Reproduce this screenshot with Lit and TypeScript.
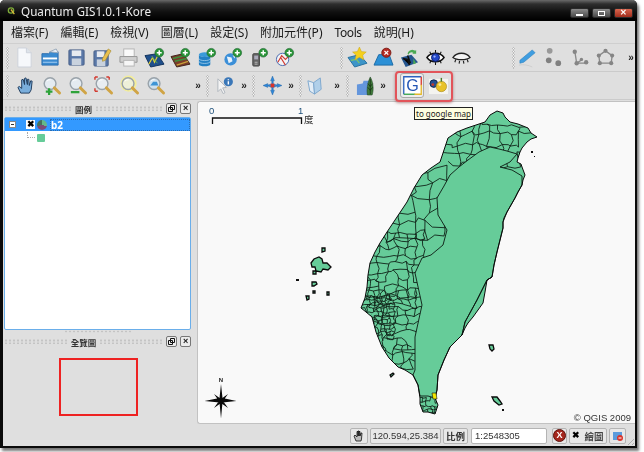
// QGIS main window, toolbars + legend dock + map canvas + status bar
import { LitElement, html, svg, css, type SVGTemplateResult } from 'lit';
import { customElement } from 'lit/decorators.js';

const plus = svg`<circle cx="15" cy="5" r="4.6" fill="#2a9438" stroke="#15602a" stroke-width=".6"/><path d="M15 2.400v5.200M12.400 5h5.200" stroke="#fff" stroke-width="1.600"/>`;
const lens = (fill: string, ring = '#9aa3aa') => svg`<circle cx="8.500" cy="8" r="6.200" fill="${fill}" stroke="${ring}" stroke-width="1.500"/><path d="M13 12.500l5.500 5.500" stroke="#d0a445" stroke-width="3" stroke-linecap="round"/><path d="M5 5.500a4.500 4.500 0 0 1 4-1.600" stroke="#fff" fill="none"/>`;

const ICONS: Record<string, SVGTemplateResult> = {
  doc: svg`<path d="M3 0h9l5 5v15H3z" fill="#f6f8fb" stroke="#ccd2da"/><path d="M12 0v5h5" fill="#dde3ea" stroke="#ccd2da"/>`,
  open: svg`<path d="M1 6h7l2-2h8v14H1z" fill="#3a8ad0" stroke="#2a6cad"/><path d="M2 10h15v2H2z" fill="#fff"/><path d="M9 4l7-3 2 4z" fill="#e8eef5" stroke="#9ab"/><path d="M2 15h15" stroke="#a9d0f2"/>`,
  save: svg`<rect x="2" y="2" width="16" height="16" rx="1" fill="#5a78a8" stroke="#4a6088"/><rect x="5" y="2.500" width="10" height="6" fill="#e8ebf0"/><rect x="5" y="11" width="10" height="7" fill="#c9d2de"/>`,
  saveas: svg`<rect x="1" y="3" width="15" height="16" rx="1" fill="#5a78a8" stroke="#4a6088"/><rect x="4" y="3.500" width="8" height="6" fill="#e8ebf0"/><rect x="4" y="12" width="9" height="7" fill="#c9d2de"/><path d="M10 11l6-10 3 2-6 10-3 1z" fill="#e9c050" stroke="#a08428" stroke-width=".6"/>`,
  print: svg`<rect x="5" y="1" width="11" height="8" fill="#fafafa" stroke="#b4b4b4"/><path d="M1 9h18v6H1z" fill="#cfcfcf" stroke="#969696"/><rect x="5" y="13" width="11" height="6" fill="#f6f6f6" stroke="#b4b4b4"/>`,
  vector: svg`<path d="M0 8l13-2 7 11-14 3z" fill="#1f4f8c" stroke="#12335c"/><path d="M4 17l4-7 2 5 3-6" stroke="#e5d33a" fill="none" stroke-width="1.200"/><path d="M7 9l6 7" stroke="#63b04a"/>${plus}`,
  raster: svg`<path d="M0 9l13-3 7 11-14 3z" fill="#7a3c2a" stroke="#40241a"/><path d="M2 11l13-3M4 14l13-3" stroke="#3f8f3c" stroke-width="1.600"/><path d="M6 18l12-4" stroke="#c9a13a" stroke-width="1.400"/>${plus}`,
  db: svg`<ellipse cx="8" cy="7" rx="6" ry="2.500" fill="#3a9bd9"/><path d="M2 7v10c0 3 12 3 12 0V7c0 3-12 3-12 0z" fill="#2380c4"/><path d="M2 11c0 3 12 3 12 0M2 14c0 3 12 3 12 0" stroke="#bfe0f5" fill="none" stroke-width=".7"/>${plus}`,
  wms: svg`<circle cx="8" cy="12" r="6.500" fill="#3b8fd8"/><path d="M4 9l5 1 1 4-4 2zM10 7l3 2-1 2z" fill="#e8f2fa"/>${plus}`,
  gps: svg`<rect x="4" y="6" width="7" height="13" rx="1" fill="#666" stroke="#444"/><rect x="5.500" y="8" width="4" height="4" fill="#aab"/><path d="M6 15h3M6 17h3" stroke="#bbb"/>${plus}`,
  wfs: svg`<circle cx="8" cy="12" r="6.500" fill="#f3f3f5" stroke="#4668b0"/><path d="M3 15l4-7 4 4 3-3M6 10l5 8" stroke="#d23a30" fill="none" stroke-width="1.200"/>${plus}`,
  star: svg`<path d="M0 10l12-3 8 9-13 4z" fill="#3d95c9" stroke="#26709e"/><path d="M3 13l6-1 3 4" stroke="#7cc46b" fill="none" stroke-width="1.400"/><path d="M12-1l2.200 4.800 5 .4-3.700 3.300 1.100 5-4.600-2.700-4.600 2.700 1.100-5-3.700-3.300 5-.4z" fill="#f4d01d" stroke="#c8a31c" stroke-width=".5"/>`,
  remove: svg`<path d="M0 18l5-11h11l4 11z" fill="#2c90d6" stroke="#1c6aa4"/><circle cx="13" cy="5" r="4.800" fill="#b52a22" stroke="#7a1a14"/><path d="M11 3l4 4m0-4l-4 4" stroke="#fff" stroke-width="1.400"/>`,
  overview: svg`<path d="M1 10l11-3 7 8-13 5z" fill="#25558f"/><path d="M3 11l5 1 2 6M8 8l3 8" stroke="#111" stroke-width="1.600"/><path d="M8 6a5 5 0 0 1 8-3l1-1v4h-4l1-1a3.400 3.400 0 0 0-5 2z" fill="#4aa852"/><path d="M14 11l3 5-3 1z" fill="#4aa852"/>`,
  eye: svg`<path d="M1 10c4-6 14-6 18 0-4 6-14 6-18 0z" fill="#fff" stroke="#111" stroke-width="1.500"/><circle cx="10" cy="10" r="4.200" fill="#2448c8" stroke="#0b1a66"/><circle cx="9" cy="9" r="1.200" fill="#9fb6ff"/><path d="M10 2v3M4 4l1.500 3M16 4l-1.500 3M10 18v-3M4 16l1.500-3M16 16l-1.500-3" stroke="#111" stroke-width="1.100"/>`,
  eyeoff: svg`<path d="M1 10c4-6 14-6 18 0-4 3-14 3-18 0z" fill="#f4f4f4" stroke="#222" stroke-width="1.400"/><path d="M4 12l-1 3M8 13.500l-.5 3M12 13.500l.5 3M16 12l1 3" stroke="#222" stroke-width="1.200"/>`,
  pencil: svg`<path d="M2 13L15 2l3 3L6 15l-4 1z" fill="#3f9de0" stroke="#2b7fbe" stroke-width=".6"/><path d="M1 18c5-1 10 0 14 2" stroke="#cdcdcd" fill="none"/>`,
  points: svg`<circle cx="6" cy="3" r="3" fill="#999"/><circle cx="5" cy="13" r="3" fill="#808080"/><circle cx="15" cy="16" r="3" fill="#808080"/>`,
  line: svg`<path d="M5 3l2 13h10M7 16l6-4" stroke="#8a8a8a" fill="none" stroke-width="1.400"/><circle cx="5" cy="4" r="2.300" fill="#858585"/><circle cx="7" cy="16" r="2.300" fill="#858585"/><circle cx="17" cy="15" r="2.300" fill="#858585"/><circle cx="12" cy="12" r="1.800" fill="#858585"/>`,
  poly: svg`<path d="M10 3l7 5-1 8H4L3 8z" fill="none" stroke="#8a8a8a" stroke-width="1.400"/><circle cx="10" cy="3" r="2.200" fill="#858585"/><circle cx="17" cy="8" r="2.200" fill="#858585"/><circle cx="16" cy="16" r="2.200" fill="#858585"/><circle cx="4" cy="16" r="2.200" fill="#858585"/><circle cx="3" cy="8" r="2.200" fill="#858585"/>`,
  hand: svg`<path d="M5 18l-3-6 1.500-1 2.500 2V4l1.500-.5L9 9V2.500l1.500-.5L12 9V3.500l1.500 0L14 10l1.500-5 1.500.5-1 9-2 3.500z" fill="#7aaedc" stroke="#1e3a5c" stroke-width="1"/>`,
  zoomin: svg`${lens('#e4ebf1')}<path d="M4 16.500h7M7.500 13v7" stroke="#2ea33a" stroke-width="2.400"/>`,
  zoomout: svg`${lens('#e4ebf1')}<path d="M3 17h9" stroke="#2ea33a" stroke-width="2.400"/>`,
  zoomfull: svg`${lens('#e8edf1')}<path d="M1 1h3M1 1v3M16 1h-3M16 1v3M1 16h3M1 16v-3" stroke="#d23a30" stroke-width="1.500"/>`,
  zoomsel: svg`<circle cx="9" cy="8" r="8.500" fill="#f4ee9a"/>${lens('#eef0d8')}`,
  zoomlayer: svg`${lens('#cfe1ee')}<path d="M4.500 10l3-4h4l1.500 4z" fill="#3d95d6"/>`,
  identify: svg`<path d="M2 3l9 9-4 .5 2.500 5-2 1-2.500-5-3 3z" fill="#f4f4f4" stroke="#b0b6be"/><circle cx="13" cy="6" r="4.800" fill="#3a77b8"/><path d="M13 3.500v1M13 5.500v3.500" stroke="#fff" stroke-width="1.500"/>`,
  pan: svg`<path d="M10 0l2 5h-1.200v3.500L15 9.500V8l5 2-5 2v-1.500L10.800 12v3H12l-2 5-2-5h1.200v-3L5 10.500V12l-5-2 5-2v1.500l4.200-1V5H8z" fill="#2f87d8" stroke="#1c5c9c" stroke-width=".4"/><rect x="8" y="8" width="4" height="4" fill="#d9342b"/>`,
  book: svg`<path d="M2 5l6 2 1 12-5-3z" fill="#e4edf6" stroke="#7ca6ce"/><path d="M8 7l7-5 1 12-7 5z" fill="#b0cfe9" stroke="#7ca6ce"/>`,
  addlayer: svg`<path d="M1 9l6-1 1-3h6v15H1z" fill="#6496dc"/><path d="M12 20c-1-5 0-13 3-19 3 5 4 13 2 19z" fill="#3f7a3a" stroke="#26492a" stroke-width=".6"/><path d="M15 3v16M12.500 8l2.500 3M17.500 8L15 11M12.500 12l2.500 3M17.500 12L15 15" stroke="#10240f" stroke-width=".7"/>`,
  google: svg`<rect x=".8" y=".8" width="18.400" height="18.400" fill="#fff"/><path d="M.8 19.200V.8h18.400" fill="none" stroke="#2b62c0" stroke-width="1.400"/><path d="M19.200.8v9" stroke="#d8352a" stroke-width="1.400"/><path d="M.8 19.200h12" stroke="#36a24a" stroke-width="1.400"/><path d="M12 19.200h7.200v-10" fill="none" stroke="#e3b92b" stroke-width="1.400"/><text x="10" y="16" text-anchor="middle" font-family="Liberation Sans, sans-serif" font-size="17" fill="#2456b4">G</text>`,
  plugin: svg`<rect x="0" y="3" width="20" height="16" fill="#f4f4f0"/><circle cx="5" cy="8" r="4" fill="#24508f" stroke="#0d2550"/><circle cx="4" cy="9" r="1.500" fill="#c43b2c"/><circle cx="13" cy="11" r="5.500" fill="#e8c229" stroke="#a5851a" stroke-width=".6"/><path d="M13 2v4" stroke="#4a7a2a" stroke-width="1.500"/><circle cx="11.500" cy="9" r="1.500" fill="#f8eb9b"/>`,
};

type Item = { i?: string; sp?: number; grip?: boolean; more?: boolean; on?: boolean };
const ic = (i: string, on = false): Item => ({ i, on });

const TOOLBAR_1: Item[] = [
  { sp: 3 }, { grip: true }, { sp: 2 },
  ...['doc', 'open', 'save', 'saveas', 'print', 'vector', 'raster', 'db', 'wms', 'gps', 'wfs'].map((n) => ic(n)),
  { sp: 43 }, { grip: true }, { sp: 1 },
  ...['star', 'remove', 'overview', 'eye', 'eyeoff'].map((n) => ic(n)),
  { sp: 38 }, { grip: true }, { sp: -1 },
  ...['pencil', 'points', 'line', 'poly'].map((n) => ic(n)),
  { sp: 8 }, { more: true },
];

const TOOLBAR_2: Item[] = [
  { sp: 3 }, { grip: true }, { sp: 3 },
  ...['hand', 'zoomin', 'zoomout', 'zoomfull', 'zoomsel', 'zoomlayer'].map((n) => ic(n)),
  { sp: 25 }, { more: true }, { sp: 3 }, { grip: true }, { sp: 3 },
  ic('identify'), { sp: 1 }, { more: true }, { sp: 3 }, { grip: true }, { sp: 4 },
  ic('pan'), { sp: 1 }, { more: true }, { sp: 3 }, { grip: true }, { sp: 0 },
  ic('book'), { sp: 4 }, { more: true }, { sp: 4 }, { grip: true }, { sp: 3 },
  ic('addlayer'), { more: true }, { sp: 11 },
  ic('google', true), ic('plugin'),
];

const MENUS = ['檔案(F)', '編輯(E)', '檢視(V)', '圖層(L)', '設定(S)', '附加元件(P)', 'Tools', '說明(H)'];

const COAST = 'M485 122 490 115 497 111 503 113 505 117 510 122 518 124 528 128 531 133 537 137 531 139 527 142 522 148 520 152 518 158 517 162 521 164 522 167 525 175 523 180 522 185 518 192 515 198 511 205 507 212 504 218 503 222 503 228 500 240 497 252 494 265 492 277 487 280 485 292 483 303 478 310 473 317 468 323 465 328 462 335 456 341 450 347 444 360 438 375 437 390 435 398 438 405 435 414 428 412 423 412 420 404 420 398 418 385 413 375 405 370 398 367 389 358 382 347 376 332 372 317 366 312 361 308 365 298 367 287 368 275 370 263 375 252 380 243 387 232 397 217 407 202 414 188 422 175 431 168 440 162 444 150 448 138 457 132 467 128 476 125z';
const EAST = 'M490 147 499 149 507 151 517 154 510 162 500 167 512 170 522 176 522 185 518 192 515 198 507 212 503 222 503 228 497 252 494 265 492 277 487 280 477 300 465 322 462 335 450 347 444 360 438 375 437 390 435 398 428 396 420 396 418 385 413 375 415 370 415 337 422 305 415 273 422 258 431 255 443 245 447 230 438 215 437 198 444 186 450 175 459 167 468 160 479 152z';
const STRIP = 'M492 277 487 280 477 300 465 322 462 335';

// seeded jitter so the district mesh comes out the same on every run
function districtMesh(): string {
  let seed = 20090421;
  const rnd = () => ((seed = (seed * 1664525 + 1013904223) >>> 0) / 4294967296);
  const bands = [
    { top: 124, bottom: 168, h: 10, w: 10, l: 440, r: 540 },
    { top: 168, bottom: 232, h: 14, w: 15, l: 385, r: 450 },
    { top: 232, bottom: 292, h: 8, w: 9, l: 360, r: 425 },
    { top: 292, bottom: 308, h: 7, w: 9, l: 355, r: 420 },
    { top: 308, bottom: 345, h: 8, w: 10, l: 355, r: 420 },
    { top: 345, bottom: 372, h: 8, w: 9, l: 375, r: 420 },
    { top: 296, bottom: 338, h: 4, w: 4, l: 366, r: 392 },
    { top: 398, bottom: 416, h: 4, w: 4, l: 415, r: 440 },
  ];
  const f = (n: number) => n.toFixed(1);
  const d: string[] = [];
  const seg = (a: number[], b: number[], j: number) => {
    const mx = (a[0] + b[0]) / 2 + (rnd() - 0.5) * j;
    const my = (a[1] + b[1]) / 2 + (rnd() - 0.5) * j;
    d.push(`M${f(a[0])} ${f(a[1])}L${f(mx)} ${f(my)}L${f(b[0])} ${f(b[1])}`);
  };
  for (const b of bands) {
    const rows = Math.round((b.bottom - b.top) / b.h);
    const cols = Math.round((b.r - b.l) / b.w);
    const pt: number[][][] = [];
    for (let r = 0; r <= rows; r++) {
      pt[r] = [];
      for (let c = 0; c <= cols; c++) {
        pt[r][c] = [b.l + c * b.w + (rnd() - 0.5) * b.w * 0.7, b.top + r * b.h + (rnd() - 0.5) * b.h * 0.7];
      }
    }
    for (let r = 0; r <= rows; r++) {
      for (let c = 0; c <= cols; c++) {
        if (c < cols && rnd() > 0.15) seg(pt[r][c], pt[r][c + 1], b.h * 0.5);
        if (r < rows && rnd() > 0.15) seg(pt[r][c], pt[r + 1][c], b.h * 0.5);
      }
    }
  }
  return d.join('');
}

const ISLANDS = [
  'M311 263l3-4 5-2 3 2 1 4 4 0 4 4-3 3-5-1-2 3-5-1-1-4-3 0z',
  'M322 248l3 0 0 3-3 1z',
  'M313 271l3 0 0 3-3 0z',
  'M312 282l4 0 1 2-3 2-2 0z',
  'M313 291l2 0 0 2-2 0z',
  'M327 292l2 0 0 3-2 0z',
  'M306 296l3 0 0 3-2 1z',
  'M489 345l4 0 1 4-2 2-2-2z',
  'M492 397l5 0 3 4 2 3-3 1-5-4z',
  'M390 375l3-2 1 1-3 3z',
];

@customElement('app-root')
export class AppRoot extends LitElement {
  static styles = css`
    :host {
      display: block;
      width: 644px;
      height: 452px;
      background: #fff;
      overflow: hidden;
      position: relative;
      font-family: 'Noto Sans', 'Noto Sans CJK TC', sans-serif;
      color: #1a1a1a;
    }
    .shot { filter: blur(0.35px); width: 644px; height: 452px; }
    .win {
      width: 637px;
      height: 448px;
      display: flex;
      flex-direction: column;
      background: #dfdfdf;
      border-left: 3px solid #0a0a0a;
      border-right: 2px solid #0a0a0a;
      border-bottom: 2px solid #0a0a0a;
      border-radius: 5px 5px 0 0;
      box-sizing: border-box;
      box-shadow: 2px 3px 3px rgba(0, 0, 0, 0.55);
    }
    .title {
      height: 21px;
      flex: none;
      margin: 0 -2px 0 -3px;
      padding: 0 4px 0 7px;
      display: flex;
      align-items: center;
      gap: 6px;
      border-radius: 5px 5px 0 0;
      background: linear-gradient(#6a6a6a 0, #2e2e2e 4px, #101010 12px, #000 20px);
      color: #eee;
      font-size: 11.7px;
    }
    .logo { width: 8px; height: 11px; flex: none; }
    .caps { margin-left: auto; display: flex; gap: 3px; padding-top: 5px; }
    .cap {
      width: 19px;
      height: 10px;
      border-radius: 2px;
      background: linear-gradient(#8a8a8a, #4a4a4a);
      border: 1px solid #2a2a2a;
      display: flex;
      align-items: center;
      justify-content: center;
      box-sizing: border-box;
    }
    .cap.x { background: linear-gradient(#d8654e, #a12d1c); }
    .cap i { display: block; background: #fff; }
    .cap .mn { width: 7px; height: 2px; margin-top: 3px; }
    .cap .mx { width: 7px; height: 5px; background: none; border: 1.500px solid #fff; box-sizing: border-box; }
    .cap .cl { color: #fff; background: none; font: bold 8px/8px 'Liberation Sans', sans-serif; }
    .menu {
      height: 23px;
      flex: none;
      display: flex;
      align-items: center;
      gap: 12px;
      padding-left: 8px;
      font-size: 12px;
      border-bottom: 1px solid #cfcfcf;
      box-sizing: border-box;
    }
    .menu span:nth-child(7) { letter-spacing: -0.4px; }
    .bar {
      height: 28px;
      flex: none;
      display: flex;
      align-items: center;
      border-bottom: 1px solid #cbcbcb;
      box-sizing: border-box;
    }
    .slot {
      width: 26px;
      height: 26px;
      flex: none;
      display: flex;
      align-items: center;
      justify-content: center;
      box-sizing: border-box;
    }
    .slot svg { width: 19px; height: 19px; display: block; overflow: visible; }
    .slot.on {
      border: 1px solid #a8a8a8;
      border-radius: 3px;
      background: #ececec;
      width: 24px;
      height: 25px;
      margin: 0 1px;
    }
    .grip {
      width: 3px;
      height: 22px;
      flex: none;
      background: radial-gradient(circle, #f8f8f8 0.9px, #bdbdbd 1px, transparent 1.4px) 0 0 / 3px 3px;
    }
    .more {
      width: 10px;
      flex: none;
      text-align: center;
      font: bold 10px/10px 'Liberation Sans', sans-serif;
      color: #222;
    }
    .hl {
      position: absolute;
      left: 395px;
      top: 71px;
      width: 58px;
      height: 31px;
      box-sizing: border-box;
      border: 2px solid #e2545a;
      border-radius: 4px;
      box-shadow: 0 1px 3px rgba(120, 40, 40, 0.5);
    }
    .tip {
      position: absolute;
      left: 414px;
      top: 107px;
      height: 13px;
      padding: 0 1px;
      background: #ffffe1;
      border: 1px solid #222;
      font: 8px/11px 'Noto Sans', sans-serif;
      white-space: nowrap;
      box-sizing: border-box;
    }
    .main { flex: 1; display: flex; min-height: 0; }
    .dock { width: 188px; flex: none; padding-left: 1px; box-sizing: border-box; display: flex; flex-direction: column; }
    .dock-head {
      height: 15px;
      flex: none;
      display: flex;
      align-items: center;
      gap: 3px;
      font-size: 8.500px;
      font-weight: 700;
      color: #333;
      margin-top: 1px;
    }
    .dots {
      flex: 1;
      height: 5px;
      background: radial-gradient(circle, #c4c4c4 0.9px, transparent 1.3px) 0 0 / 4px 3px;
    }
    .dbtn {
      width: 11px;
      height: 11px;
      flex: none;
      border: 1px solid #777;
      border-radius: 2px;
      background: #ececec;
      box-sizing: border-box;
      font: bold 9px/9px 'Liberation Sans', sans-serif;
      text-align: center;
      color: #111;
    }
    .dbtn svg { display: block; width: 9px; height: 9px; }
    .legend {
      height: 213px;
      flex: none;
      margin-top: 1px;
      border: 1px solid #6aaeea;
      border-radius: 2px;
      background: #fff;
      box-sizing: border-box;
    }
    .row { height: 13px; display: flex; align-items: center; position: relative; }
    .row.sel { background: #3399ff; color: #fff; font: bold 10px/13px 'Noto Sans', sans-serif; }
    .tree { width: 7px; height: 7px; margin-left: 4px; border: 1px solid #888; background: #fff; box-sizing: border-box; position: relative; }
    .tree::after { content: ''; position: absolute; left: 1px; right: 1px; top: 2px; height: 1px; background: #333; }
    .check { width: 9px; height: 9px; margin-left: 10px; background: #fff; color: #000; font: bold 9px/9px 'Liberation Sans', sans-serif; text-align: center; }
    .lyr { width: 10px; height: 10px; margin-left: 2px; border-radius: 50%; background: conic-gradient(#64b88a 0 30%, #7c4a78 0 70%, #46705c 0); }
    .name { margin-left: 3px; flex: 1; outline: 1px dotted #2a6cb0; outline-offset: -1px; padding-left: 1px; height: 12px; line-height: 12px; }
    .child { padding-left: 22px; gap: 2px; }
    .child .dash { width: 7px; height: 5px; border-left: 1px dotted #aaa; border-bottom: 1px dotted #aaa; margin-top: -6px; }
    .child .sw { width: 8px; height: 8px; background: #66cc99; border-radius: 1px; }
    .resize {
      height: 3px;
      flex: none;
      margin: 0 60px;
      background: radial-gradient(circle, #c4c4c4 0.8px, transparent 1.2px) 0 0 / 4px 3px;
    }
    .over { flex: 1; display: flex; justify-content: center; padding: 9px 0 0 1px; }
    .ext { width: 79px; height: 58px; box-sizing: border-box; border: 2px solid #ee2222; }
    .canvas {
      flex: 1;
      margin: 1px 0 1px 6px;
      border: 1px solid #c2c2c2;
      border-right: none;
      border-radius: 3px 0 0 3px;
      background: #f9f9f9;
      overflow: hidden;
    }
    .canvas svg { display: block; }
    .status {
      height: 21px;
      flex: none;
      display: flex;
      align-items: center;
      gap: 2px;
      padding-left: 347px;
      font-size: 10px;
      position: relative;
    }
    .sb {
      height: 16px;
      box-sizing: border-box;
      border: 1px solid #b4b4b4;
      border-radius: 2px;
      background: #e8e8e8;
      flex: none;
      display: flex;
      align-items: center;
      justify-content: center;
      white-space: nowrap;
    }
    .sb svg { width: 12px; height: 12px; }
    .hand { width: 18px; }
    .coord { width: 71px; font: 9.500px 'Liberation Sans', sans-serif; color: #333; }
    .scale { width: 25px; font-size: 9.500px; font-weight: 700; color: #333; }
    .input { width: 76px; background: #fff; justify-content: flex-start; padding-left: 3px; margin-left: 1px; font: 9.500px 'Liberation Sans', sans-serif; color: #333; }
    .stop { width: 15px; margin-left: 3px; }
    .stop b { width: 13px; height: 13px; border-radius: 50%; background: #a5271d; border: 1px solid #5c120c; box-sizing: border-box; color: #fff; font: bold 9px/11px 'Liberation Sans', sans-serif; text-align: center; }
    .render { width: 38px; gap: 4px; font-size: 9.500px; font-weight: 700; color: #444; }
    .render span { color: #000; font: bold 9px/9px 'Liberation Sans', sans-serif; }
    .crs { width: 17px; }
    .sizer {
      position: absolute;
      right: 1px;
      bottom: 1px;
      width: 9px;
      height: 9px;
      background: repeating-linear-gradient(135deg, transparent 0 2px, #b0b0b0 2px 3px);
      clip-path: polygon(100% 0, 100% 100%, 0 100%);
    }
  `;

  private bar(items: Item[]) {
    return html`<div class="bar">
      ${items.map((it) => {
        if (it.grip) return html`<div class="grip"></div>`;
        if (it.more) return html`<div class="more">»</div>`;
        if (it.i) return html`<div class="slot ${it.on ? 'on' : ''}"><svg viewBox="0 0 20 20">${ICONS[it.i]}</svg></div>`;
        return html`<div style="flex:none;margin-right:${it.sp}px"></div>`;
      })}
    </div>`;
  }

  private dockHead(title: string) {
    return html`<div class="dock-head">
      <div class="dots"></div><span>${title}</span><div class="dots"></div>
      <div class="dbtn">
        <svg viewBox="0 0 9 9"><path d="M3.500 1.500h4v4h-4zM1.500 3.500h4v4h-4z" fill="#ececec" stroke="#111"/></svg>
      </div>
      <div class="dbtn">×</div>
    </div>`;
  }

  private map() {
    return html`<svg width="439" height="321" viewBox="198 102 439 321">
      <defs><clipPath id="tw"><path d="${COAST}"/></clipPath></defs>
      <g font-family="Liberation Sans, sans-serif" font-size="9.500" fill="#1c4f7a">
        <text x="209" y="114">0</text><text x="298" y="114">1</text>
      </g>
      <text x="304" y="123" font-size="9.500" font-family="Noto Sans CJK TC, sans-serif" fill="#222">度</text>
      <path d="M212.500 124v-6h89v6" fill="none" stroke="#111" stroke-width="1.300"/>
      <path d="${COAST}" fill="#66cc99"/>
      <path d="${districtMesh()}" clip-path="url(#tw)" fill="none" stroke="#0c1a12" stroke-width=".85"/>
      <path d="${EAST}" fill="#66cc99" stroke="#0c1a12" stroke-width=".9"/>
      <path d="${STRIP}" fill="none" stroke="#0c1a12"/>
      <path d="${COAST}" fill="none" stroke="#0a0a0a"/>
      <path d="M432 393l4 0 1 6-4 0z" fill="#f4e800" stroke="#111" stroke-width=".6"/>
      <path d="${ISLANDS.join('')}" fill="#66cc99" stroke="#0a0a0a" stroke-width="1.300"/>
      <path d="M502 409h2v2h-2zM531 151h2v2h-2zM534 156h1v1h-1zM296 279h3v2h-3z" fill="#111"/>
      <text x="221" y="382" text-anchor="middle" font-size="6" font-weight="700" font-family="Liberation Sans, sans-serif" fill="#222">N</text>
      <path d="M221 384l1.500 14 14 3-14 1.500-1.500 16-1.500-16-15-1.500 15-3zM214 394l7 5 7-5-5 7 5 7-7-5-7 5 5-7z" fill="#0a0a0a"/>
      <text x="631" y="421" text-anchor="end" font-size="9.500" font-family="Liberation Sans, sans-serif" fill="#333">© QGIS 2009</text>
    </svg>`;
  }

  render() {
    return html`
      <div class="shot">
        <div class="win">
          <div class="title">
            <svg class="logo" viewBox="0 0 12 13"><circle cx="6" cy="6.500" r="4" fill="none" stroke="#7fae3a" stroke-width="2"/><path d="M6 5l5 7" stroke="#d9b93a" stroke-width="2"/></svg>
            <span>Quantum GIS1.0.1-Kore</span>
            <div class="caps">
              <div class="cap"><i class="mn"></i></div>
              <div class="cap"><i class="mx"></i></div>
              <div class="cap x"><i class="cl">✕</i></div>
            </div>
          </div>
          <div class="menu">${MENUS.map((m) => html`<span>${m}</span>`)}</div>
          ${this.bar(TOOLBAR_1)} ${this.bar(TOOLBAR_2)}
          <div class="main">
            <div class="dock">
              ${this.dockHead('圖例')}
              <div class="legend">
                <div class="row sel">
                  <div class="tree"></div><div class="check">✖</div><div class="lyr"></div><div class="name">b2</div>
                </div>
                <div class="row child"><div class="dash"></div><div class="sw"></div></div>
              </div>
              <div class="resize"></div>
              ${this.dockHead('全覽圖')}
              <div class="over"><div class="ext"></div></div>
            </div>
            <div class="canvas">${this.map()}</div>
          </div>
          <div class="status">
            <div class="sb hand">
              <svg viewBox="0 0 12 12"><path d="M3 11L1 6l1-1 2 2V1.500h1V6V1h1v5V1.500h1V6l1-3h1l-.5 6L8 11z" fill="#bbb" stroke="#111" stroke-width=".8"/></svg>
            </div>
            <div class="sb coord">120.594,25.384</div>
            <div class="sb scale">比例</div>
            <div class="sb input">1:2548305</div>
            <div class="sb stop"><b>X</b></div>
            <div class="sb render"><span>✖</span>繪圖</div>
            <div class="sb crs">
              <svg viewBox="0 0 12 12"><rect x="1" y="2" width="9" height="8" fill="#5a9bdc"/><circle cx="8" cy="8" r="3" fill="#d9342b"/><path d="M6.500 8h3" stroke="#fff"/></svg>
            </div>
            <div class="sizer"></div>
          </div>
        </div>
        <div class="hl"></div>
        <div class="tip">to google map</div>
      </div>
    `;
  }
}
